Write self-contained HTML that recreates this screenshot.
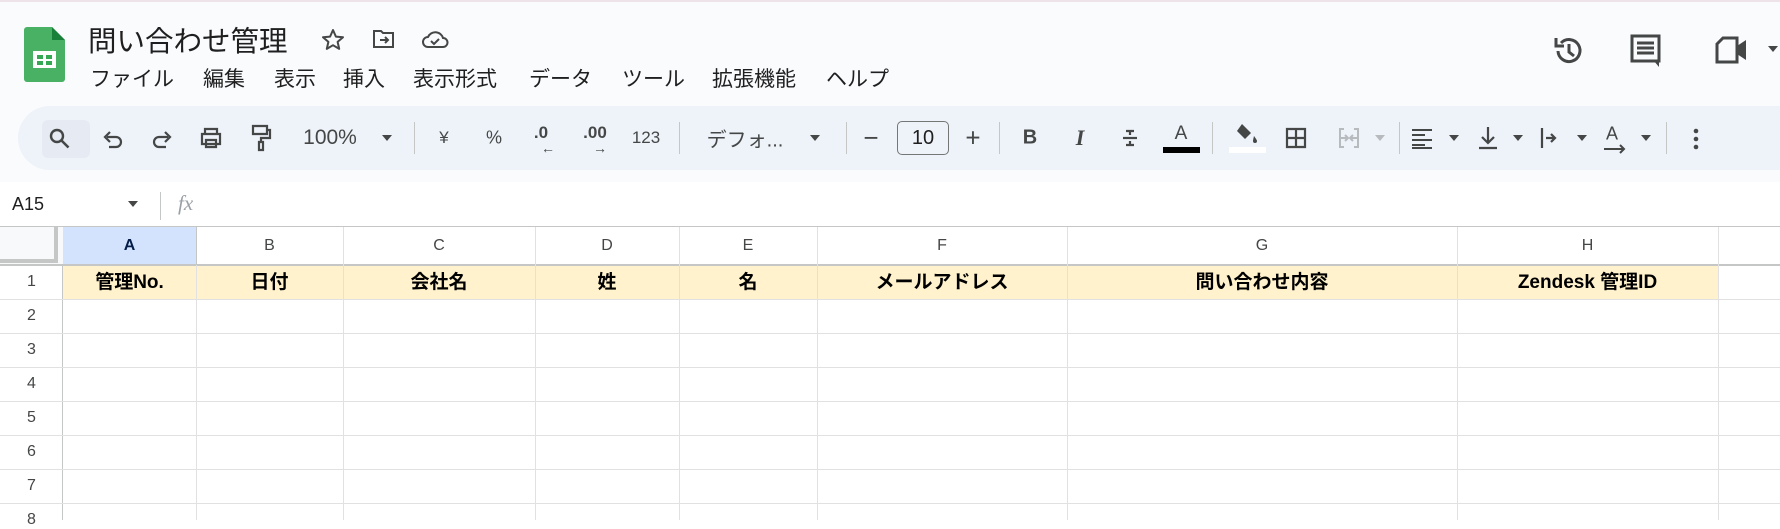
<!DOCTYPE html>
<html><head><meta charset="utf-8"><style>
*{margin:0;padding:0;box-sizing:border-box}
body{width:1780px;height:520px;overflow:hidden;background:#fff;font-family:"Liberation Sans","Noto Sans CJK JP",sans-serif;color:#1f1f1f;position:relative}
.top{position:absolute;left:0;top:0;width:1780px;height:182px;background:#f9fbfd;border-top:2px solid #efe3ea}
.abs{position:absolute;white-space:nowrap}
.menu{font-size:21px;top:63px;color:#1f1f1f}
.pill{position:absolute;left:18px;top:106px;width:1790px;height:64px;background:#eef2f9;border-radius:32px}
.ti{position:absolute;top:138px;transform:translate(-50%,-50%);font-size:19px;color:#444746}
.sep{position:absolute;top:122px;width:1px;height:32px;background:#c4c7c5}
.dd{position:absolute;top:135px;width:0;height:0;border-left:5px solid transparent;border-right:5px solid transparent;border-top:6px solid #444746;transform:translateX(-50%)}
.vl{position:absolute;width:1px;background:#e1e1e1}
.hl{position:absolute;height:1px;background:#e1e1e1}
.ch{position:absolute;top:227px;height:38px;font-size:16px;color:#444746;text-align:center;line-height:38px}
.h1{position:absolute;top:266px;height:33px;font-size:19px;font-weight:bold;text-align:center;line-height:33px;color:#000}
.rn{position:absolute;left:0;width:63px;text-align:center;font-size:16px;color:#444746}
</style></head><body>
<div class="top"></div>
<svg class="abs" style="left:24px;top:27px" width="41" height="55" viewBox="0 0 41 55"><path d="M3 0H28L41 13V52a3 3 0 0 1-3 3H3a3 3 0 0 1-3-3V3a3 3 0 0 1 3-3z" fill="#34a853" opacity=".9"/><path d="M28 0V13H41z" fill="#188038"/><rect x="9" y="24" width="23" height="17" fill="#fff"/><rect x="13" y="28" width="6" height="4" fill="#34a853"/><rect x="22" y="28" width="6" height="4" fill="#34a853"/><rect x="13" y="34" width="6" height="4" fill="#34a853"/><rect x="22" y="34" width="6" height="4" fill="#34a853"/></svg>
<div class="abs" style="left:88px;top:19px;font-size:28.5px;color:#1f1f1f">問い合わせ管理</div>
<svg class="abs" style="left:321px;top:28px" width="24" height="23" viewBox="0 0 24 23"><path d="M12 2l2.9 6.6 7.1.6-5.4 4.7 1.6 7-6.2-3.7-6.2 3.7 1.6-7L2 9.2l7.1-.6z" fill="none" stroke="#444746" stroke-width="2" stroke-linejoin="round"/></svg>
<svg class="abs" style="left:372px;top:29px" width="24" height="20" viewBox="0 0 24 20"><path d="M2 2h7l2 2h10v14H2z" fill="none" stroke="#444746" stroke-width="2"/><path d="M8 11h8M13 8l3 3-3 3" fill="none" stroke="#444746" stroke-width="2"/></svg>
<svg class="abs" style="left:421px;top:28px" width="28" height="22" viewBox="0 0 28 22"><path d="M7 19a5 5 0 0 1 0-10 8 8 0 0 1 15 1 4.5 4.5 0 0 1 0 9z" fill="none" stroke="#444746" stroke-width="2"/><path d="M10 13l3 3 5-5" fill="none" stroke="#444746" stroke-width="2"/></svg>
<div class="abs menu" style="left:90px">ファイル</div>
<div class="abs menu" style="left:203px">編集</div>
<div class="abs menu" style="left:274px">表示</div>
<div class="abs menu" style="left:343px">挿入</div>
<div class="abs menu" style="left:413px">表示形式</div>
<div class="abs menu" style="left:529px">データ</div>
<div class="abs menu" style="left:622px">ツール</div>
<div class="abs menu" style="left:712px">拡張機能</div>
<div class="abs menu" style="left:826px">ヘルプ</div>
<svg class="abs" style="left:1552px;top:34px" width="34" height="34" viewBox="0 0 34 34"><path d="M6 17a11 11 0 1 0 3-8" fill="none" stroke="#444746" stroke-width="3"/><path d="M4 4v8h8" fill="none" stroke="#444746" stroke-width="3"/><path d="M17 10v8l5 4" fill="none" stroke="#444746" stroke-width="3"/></svg>
<svg class="abs" style="left:1630px;top:34px" width="32" height="34" viewBox="0 0 32 34"><path d="M2 2h27v25H2z" fill="none" stroke="#444746" stroke-width="3"/><path d="M7 9h17M7 14h17M7 19h17" stroke="#444746" stroke-width="3"/><path d="M24 27l5 6v-6z" fill="#444746"/></svg>
<svg class="abs" style="left:1715px;top:36px" width="34" height="28" viewBox="0 0 34 28"><path d="M2 8l6-6h14v24H2z" fill="none" stroke="#444746" stroke-width="3"/><path d="M22 10l9-6v20l-9-6z" fill="#444746"/></svg>
<div class="dd" style="left:1773px;top:46px"></div>
<div class="pill"></div>
<div class="abs" style="left:42px;top:120px;width:48px;height:38px;background:#e6ebf3;border-radius:6px"></div>
<svg class="abs" style="left:48px;top:127px" width="24" height="24" viewBox="0 0 24 24"><circle cx="9" cy="9" r="6" fill="none" stroke="#444746" stroke-width="2.4"/><path d="M13.5 13.5l7 7" stroke="#444746" stroke-width="2.6"/></svg>
<svg class="abs" style="left:102px;top:128px" width="22" height="22" viewBox="0 0 22 22"><path d="M5 9h9a5 5 0 0 1 0 10H7" fill="none" stroke="#444746" stroke-width="2.2"/><path d="M8 4L3 9l5 5" fill="none" stroke="#444746" stroke-width="2.2"/></svg>
<svg class="abs" style="left:151px;top:128px" width="22" height="22" viewBox="0 0 22 22"><path d="M17 9H8a5 5 0 0 0 0 10h7" fill="none" stroke="#444746" stroke-width="2.2"/><path d="M14 4l5 5-5 5" fill="none" stroke="#444746" stroke-width="2.2"/></svg>
<svg class="abs" style="left:199px;top:126px" width="24" height="24" viewBox="0 0 24 24"><path d="M6 8V3h12v5M3 8h18v10H3zM7 14h10v7H7z" fill="#eef2f9" stroke="#444746" stroke-width="2.2"/></svg>
<svg class="abs" style="left:250px;top:124px" width="22" height="28" viewBox="0 0 22 28"><path d="M3 2h14v8H3zM17 6h3v8h-9v4M9 18h4v8H9z" fill="none" stroke="#444746" stroke-width="2.2"/></svg>
<div class="ti" style="left:330px;font-size:21px">100%</div>
<div class="dd" style="left:387px"></div>
<div class="sep" style="left:414px"></div>
<div class="ti" style="left:444px;font-size:17px">¥</div>
<div class="ti" style="left:494px;font-size:18px">%</div>
<div class="ti" style="left:541px;font-size:17px;font-weight:bold;top:133px">.0</div><div class="ti" style="left:548px;top:148px;font-size:14px">←</div>
<div class="ti" style="left:595px;font-size:17px;font-weight:bold;top:133px">.00</div><div class="ti" style="left:600px;top:148px;font-size:14px">→</div>
<div class="ti" style="left:646px;font-size:17px">123</div>
<div class="sep" style="left:679px"></div>
<div class="ti" style="left:745px;font-size:20px">デフォ...</div>
<div class="dd" style="left:815px"></div>
<div class="sep" style="left:846px"></div>
<div class="ti" style="left:871px;font-size:26px">−</div>
<div class="abs" style="left:897px;top:121px;width:52px;height:34px;border:1px solid #747775;border-radius:5px;font-size:20px;text-align:center;line-height:32px;color:#1f1f1f">10</div>
<div class="ti" style="left:973px;font-size:26px">+</div>
<div class="sep" style="left:999px"></div>
<div class="ti" style="left:1030px;font-weight:bold;font-size:20px">B</div>
<div class="ti" style="left:1080px;font-style:italic;font-family:'Liberation Serif',serif;font-weight:bold;font-size:22px">I</div>
<svg class="abs" style="left:1120px;top:127px" width="20" height="22" viewBox="0 0 20 22"><path d="M3 11h14" stroke="#444746" stroke-width="2.2"/><path d="M6 4h8M10 4v4M6 18h8M10 14v4" stroke="#444746" stroke-width="2.2"/></svg>
<div class="ti" style="left:1181px;font-size:19px;top:134px">A</div>
<div class="abs" style="left:1163px;top:147px;width:37px;height:6px;background:#000"></div>
<div class="sep" style="left:1212px"></div>
<svg class="abs" style="left:1233px;top:122px" width="26" height="22" viewBox="0 0 26 22"><path d="M9 2l9 9-6 6-8-8z" fill="#444746"/><path d="M21 14c0 0 3 4 3 5a2 2 0 0 1-4 0c0-1 1-5 1-5z" fill="#444746"/></svg>
<div class="abs" style="left:1229px;top:147px;width:37px;height:6px;background:#fff"></div>
<svg class="abs" style="left:1285px;top:127px" width="22" height="22" viewBox="0 0 22 22"><path d="M2 2h18v18H2zM11 2v18M2 11h18" fill="none" stroke="#444746" stroke-width="2.2"/></svg>
<svg class="abs" style="left:1338px;top:127px" width="22" height="22" viewBox="0 0 22 22"><path d="M6 2H2v18h4M16 2h4v18h-4M2 11h7M13 11h7M7 8l3 3-3 3M15 8l-3 3 3 3" fill="none" stroke="#b8bbbe" stroke-width="2"/></svg>
<div class="dd" style="left:1380px;border-top-color:#b8bbbe"></div>
<div class="sep" style="left:1399px"></div>
<svg class="abs" style="left:1411px;top:127px" width="22" height="22" viewBox="0 0 22 22"><path d="M1 3h20M1 8h13M1 13h20M1 18h13M1 21h20" stroke="#444746" stroke-width="2"/></svg>
<div class="dd" style="left:1454px"></div>
<svg class="abs" style="left:1477px;top:126px" width="22" height="24" viewBox="0 0 22 24"><path d="M11 1v16M5 11l6 6 6-6M2 22h18" fill="none" stroke="#444746" stroke-width="2.2"/></svg>
<div class="dd" style="left:1518px"></div>
<svg class="abs" style="left:1540px;top:126px" width="22" height="24" viewBox="0 0 22 24"><path d="M2 2v20M6 12h9M11 8l4 4-4 4" fill="none" stroke="#444746" stroke-width="2.2"/></svg>
<div class="dd" style="left:1582px"></div>
<div class="ti" style="left:1612px;top:134px;font-size:18px">A</div>
<svg class="abs" style="left:1603px;top:144px" width="24" height="10" viewBox="0 0 24 10"><path d="M1 5h20M17 1l4 4-4 4" fill="none" stroke="#444746" stroke-width="2"/></svg>
<div class="dd" style="left:1646px"></div>
<div class="sep" style="left:1666px"></div>
<svg class="abs" style="left:1692px;top:128px" width="8" height="22" viewBox="0 0 8 22"><circle cx="4" cy="3" r="2.3" fill="#444746"/><circle cx="4" cy="11" r="2.3" fill="#444746"/><circle cx="4" cy="19" r="2.3" fill="#444746"/></svg>
<div class="abs" style="left:12px;top:194px;font-size:18px;color:#1f1f1f">A15</div>
<div class="dd" style="left:133px;top:201px"></div>
<div class="abs" style="left:160px;top:192px;width:1px;height:28px;background:#c4c7c5"></div>
<div class="abs" style="left:178px;top:191px;font-size:21px;font-style:italic;font-family:'Liberation Serif',serif;color:#9aa0a6">fx</div>
<div class="abs" style="left:0;top:226px;width:1780px;height:1px;background:#c4c7c5"></div>
<div class="abs" style="left:0;top:227px;width:63px;height:38px;background:#f8f9fa"></div>
<div class="abs" style="left:0;top:227px;width:58px;height:36px;background:#f8f9fa;border-right:4px solid #c4c7c5;border-bottom:4px solid #c4c7c5"></div>
<div class="abs" style="left:63px;top:227px;width:133px;height:38px;background:#d3e3fd"></div>
<div class="abs" style="left:63px;top:265px;width:1655px;height:34px;background:#fff2cc"></div>
<div class="abs" style="left:62px;top:265px;width:1px;height:255px;background:#c4c7c5"></div>
<div class="abs" style="left:0;top:264px;width:1780px;height:2px;background:#c4c7c5"></div>
<div class="vl" style="left:196px;top:227px;height:293px"></div>
<div class="vl" style="left:343px;top:227px;height:293px"></div>
<div class="vl" style="left:535px;top:227px;height:293px"></div>
<div class="vl" style="left:679px;top:227px;height:293px"></div>
<div class="vl" style="left:817px;top:227px;height:293px"></div>
<div class="vl" style="left:1067px;top:227px;height:293px"></div>
<div class="vl" style="left:1457px;top:227px;height:293px"></div>
<div class="vl" style="left:1718px;top:227px;height:293px"></div>
<div class="abs" style="left:196px;top:227px;width:1px;height:38px;background:#c4c7c5"></div>
<div class="hl" style="left:0;top:299px;width:1780px"></div>
<div class="hl" style="left:0;top:333px;width:1780px"></div>
<div class="hl" style="left:0;top:367px;width:1780px"></div>
<div class="hl" style="left:0;top:401px;width:1780px"></div>
<div class="hl" style="left:0;top:435px;width:1780px"></div>
<div class="hl" style="left:0;top:469px;width:1780px"></div>
<div class="hl" style="left:0;top:503px;width:1780px"></div>
<div class="ch" style="left:63px;width:133px;font-weight:bold;color:#041e49">A</div>
<div class="ch" style="left:196px;width:147px">B</div>
<div class="ch" style="left:343px;width:192px">C</div>
<div class="ch" style="left:535px;width:144px">D</div>
<div class="ch" style="left:679px;width:138px">E</div>
<div class="ch" style="left:817px;width:250px">F</div>
<div class="ch" style="left:1067px;width:390px">G</div>
<div class="ch" style="left:1457px;width:261px">H</div>
<div class="h1" style="left:63px;width:133px">管理No.</div>
<div class="h1" style="left:196px;width:147px">日付</div>
<div class="h1" style="left:343px;width:192px">会社名</div>
<div class="h1" style="left:535px;width:144px">姓</div>
<div class="h1" style="left:679px;width:138px">名</div>
<div class="h1" style="left:817px;width:250px">メールアドレス</div>
<div class="h1" style="left:1067px;width:390px">問い合わせ内容</div>
<div class="h1" style="left:1457px;width:261px">Zendesk 管理ID</div>
<div class="rn" style="top:273px">1</div>
<div class="rn" style="top:307px">2</div>
<div class="rn" style="top:341px">3</div>
<div class="rn" style="top:375px">4</div>
<div class="rn" style="top:409px">5</div>
<div class="rn" style="top:443px">6</div>
<div class="rn" style="top:477px">7</div>
<div class="rn" style="top:511px">8</div>
</body></html>
